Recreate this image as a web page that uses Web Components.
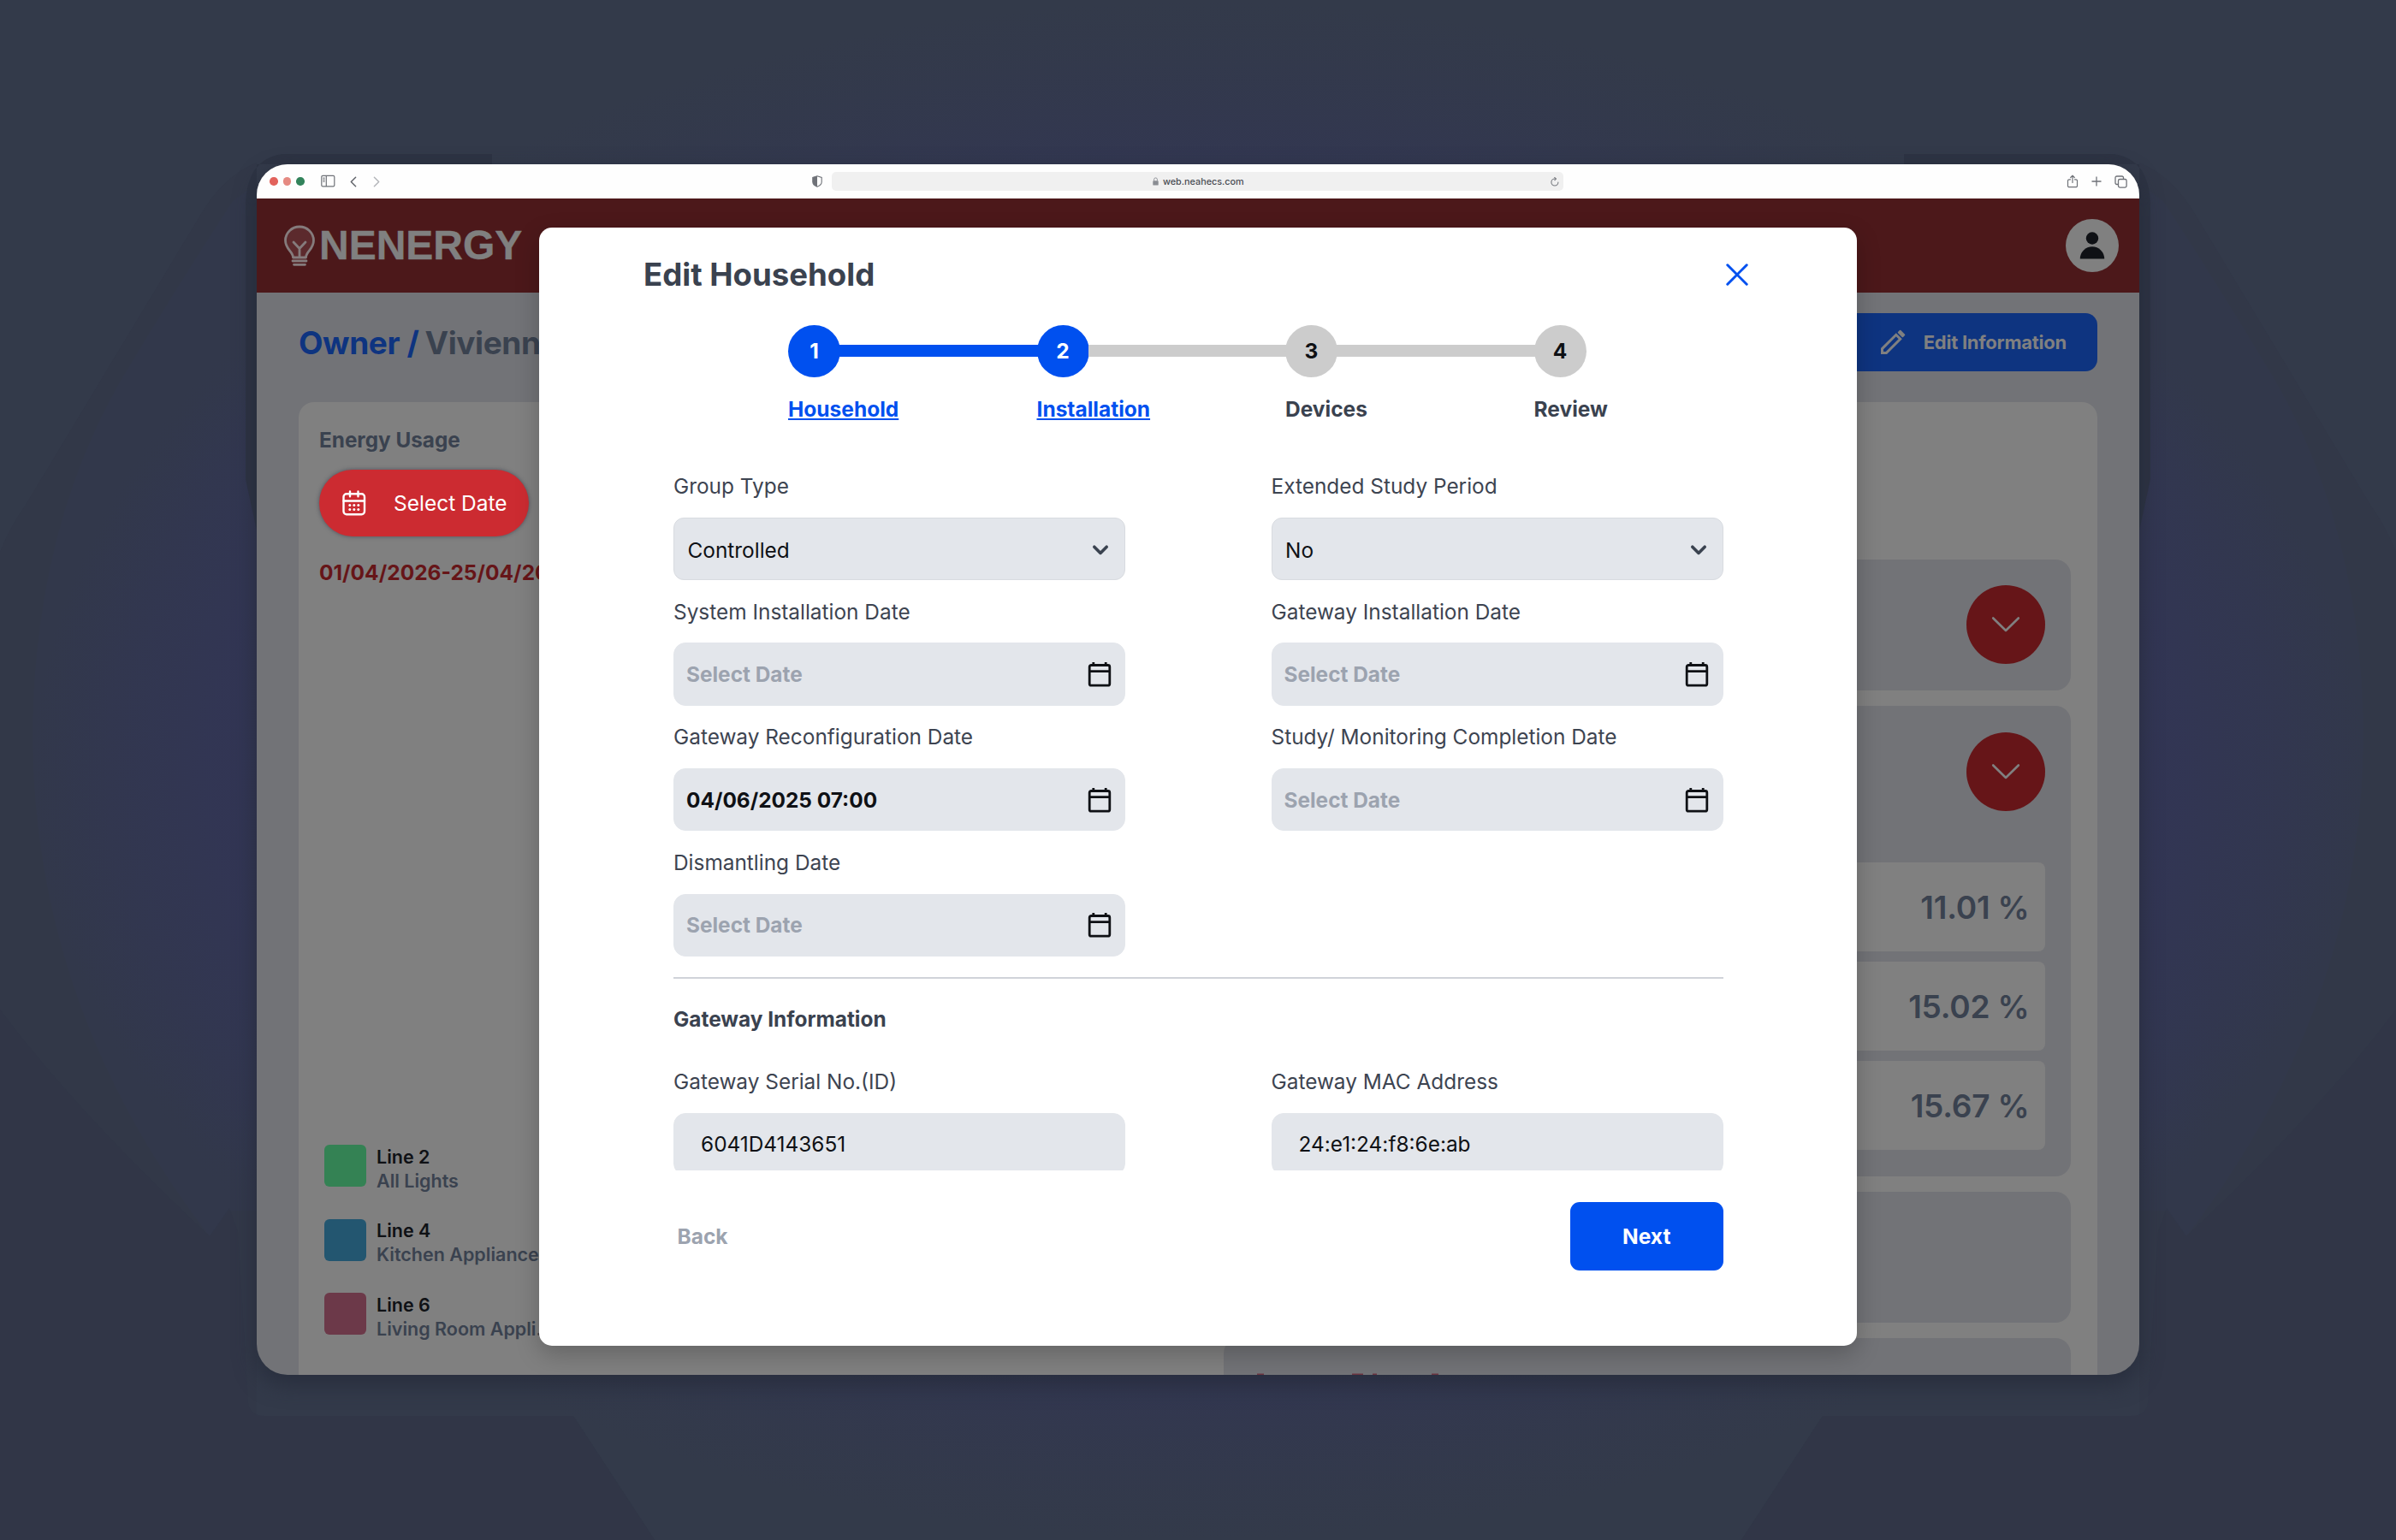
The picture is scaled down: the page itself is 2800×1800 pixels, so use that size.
<!DOCTYPE html>
<html lang="en">
<head>
<meta charset="UTF-8">
<title>Edit Household</title>
<style>
  body {
    margin: 0;
    width: 2800px;
    height: 1800px;
    overflow: hidden;
    background: #333a4a;
    font-family: Inter, "Liberation Sans", sans-serif;
  }
</style>
</head>
<body>
<page-backdrop>
  <browser-window address="web.neahecs.com">
    <app-header></app-header>
    <app-page>
      <span slot="crumb">Owner /</span>
      <span slot="name">Vivienne</span>
      <energy-usage slot="left" range="01/04/2026-25/04/2026">
        <legend-line color="#348254" name="Line 2">All Lights</legend-line>
        <legend-line color="#235670" name="Line 4">Kitchen Appliance</legend-line>
        <legend-line color="#6c3949" name="Line 6">Living Room Appli...</legend-line>
      </energy-usage>
      <info-group slot="right"></info-group>
      <info-group slot="right">
        <percent-row>11.01 %</percent-row>
        <percent-row>15.02 %</percent-row>
        <percent-row>15.67 %</percent-row>
      </info-group>
      <info-group slot="right" plain></info-group>
      <info-group slot="right" plain cut></info-group>
    </app-page>
    <edit-dialog slot="dialog" heading="Edit Household">
      <step-item slot="steps" number="1" done line>Household</step-item>
      <step-item slot="steps" number="2" done>Installation</step-item>
      <step-item slot="steps" number="3">Devices</step-item>
      <step-item slot="steps" number="4" last>Review</step-item>

      <form-field kind="select" label="Group Type">Controlled</form-field>
      <form-field kind="select" label="Extended Study Period">No</form-field>
      <form-field kind="date" label="System Installation Date" empty>Select Date</form-field>
      <form-field kind="date" label="Gateway Installation Date" empty>Select Date</form-field>
      <form-field kind="date" label="Gateway Reconfiguration Date">04/06/2025 07:00</form-field>
      <form-field kind="date" label="Study/ Monitoring Completion Date" empty>Select Date</form-field>
      <form-field kind="date" label="Dismantling Date" empty>Select Date</form-field>

      <form-field slot="gateway" kind="text" label="Gateway Serial No.(ID)">6041D4143651</form-field>
      <form-field slot="gateway" kind="text" label="Gateway MAC Address">24:e1:24:f8:6e:ab</form-field>
    </edit-dialog>
  </browser-window>
</page-backdrop>

<script>
// Icon markup, keyed by name
const ICONS = {
  sidebar: '<svg width="17" height="16" viewBox="0 0 17 16" fill="none" stroke="#6f7278" stroke-width="1.2"><rect x=".8" y="1.3" width="15" height="12.6" rx="1.4"/><path d="M6.3 1.3v12.6M2.5 4.2h2M2.5 6.2h2M2.5 8.2h2"/></svg>',
  back: '<svg width="8" height="13" viewBox="0 0 8 13" fill="none" stroke="#62656b" stroke-width="1.5" stroke-linecap="round" stroke-linejoin="round"><path d="M6.6 1.2 1.3 6.5l5.3 5.3"/></svg>',
  forward: '<svg width="8" height="13" viewBox="0 0 8 13" fill="none" stroke="#b4b6ba" stroke-width="1.5" stroke-linecap="round" stroke-linejoin="round"><path d="M1.4 1.2 6.7 6.5l-5.3 5.3"/></svg>',
  shield: '<svg width="12" height="14" viewBox="0 0 12 14"><path d="M6 .8 11.2 2.5v5.2c0 2.6-2.3 4.4-5.2 5.6C3.1 12.1.8 10.3.8 7.7V2.5z" fill="none" stroke="#6f7278" stroke-width="1.1"/><path d="M6 .8v12.5C3.1 12.1.8 10.3.8 7.7V2.5z" fill="#6f7278"/></svg>',
  lock: '<svg width="7" height="10" viewBox="0 0 7 10"><rect x=".3" y="4.2" width="6.4" height="5.4" rx=".9" fill="#8a8d93"/><path d="M1.6 4.5V2.8a1.9 1.9 0 0 1 3.8 0v1.7" fill="none" stroke="#8a8d93" stroke-width=".9"/></svg>',
  reload: '<svg width="10" height="11" viewBox="0 0 10 11" fill="none" stroke="#777a80" stroke-width="1.1" stroke-linecap="round"><path d="M8.9 6a4 4 0 1 1-4-4h1.3"/><path d="M4.7.5 6.4 2 4.9 3.7"/></svg>',
  share: '<svg width="14" height="16" viewBox="0 0 14 16" fill="none" stroke="#6f7278" stroke-width="1.2" stroke-linecap="round" stroke-linejoin="round"><path d="M4.5 5.8H3a1.5 1.5 0 0 0-1.5 1.5v5.9A1.5 1.5 0 0 0 3 14.7h8a1.5 1.5 0 0 0 1.5-1.5V7.3A1.5 1.5 0 0 0 11 5.8H9.5M7 9.5V1.4M4.7 3.5 7 1.2l2.3 2.3"/></svg>',
  plus: '<svg width="12" height="12" viewBox="0 0 12 12" stroke="#6f7278" stroke-width="1.3"><path d="M6 .5v11M.5 6h11"/></svg>',
  copy: '<svg width="15" height="15" viewBox="0 0 15 15" fill="none" stroke="#6f7278" stroke-width="1.3"><rect x="4.5" y="4.5" width="9.6" height="9.6" rx="1.8"/><path d="M4.5 10.5H2.7A1.7 1.7 0 0 1 1 8.8V2.7A1.7 1.7 0 0 1 2.7 1h6.1a1.7 1.7 0 0 1 1.7 1.7v1.8"/></svg>',
  bulb: '<svg width="38" height="48" viewBox="0 0 38 48" fill="none" stroke="#857b7c" stroke-width="2.8" stroke-linecap="round" stroke-linejoin="round"><path d="M11.5 38c0-7-9-9.5-9-20a16.5 16 0 0 1 33 0c0 10.5-9 13-9 20z" fill="#5c2a2d"/><path d="M19 37.5V27.500M19 27.5 12 20M19 27.5l7-7.5"/><path d="M11 42h16M12.5 46.3h13"/></svg>',
  pencil: '<svg width="30" height="30" viewBox="0 0 30 30" fill="none" stroke="#808080" stroke-width="3" stroke-linejoin="miter"><path d="M2.5 22.6 18.8 6.3l4.9 4.9L7.4 27.5H2.5z"/><path d="m21.7 3.6 1.9-1.9 4.7 4.7-1.9 1.9z" fill="#808080" stroke-width="2" stroke-linejoin="round"/></svg>',
  calendarDots: '<svg width="28" height="30" viewBox="0 0 28 30" fill="none" stroke="#fff" stroke-width="2.4" stroke-linecap="round" stroke-linejoin="round"><rect x="1.5" y="4.3" width="24.5" height="24" rx="3.5"/><path d="M1.5 12.5H26M9 1.5v5.8M18.5 1.5v5.8"/><g fill="#fff" stroke="none"><circle cx="8.8" cy="17.4" r="1.5"/><circle cx="13.8" cy="17.4" r="1.5"/><circle cx="18.8" cy="17.4" r="1.5"/><circle cx="8.8" cy="22.4" r="1.5"/><circle cx="13.8" cy="22.4" r="1.5"/><circle cx="18.8" cy="22.4" r="1.5"/></g></svg>',
  calendar: '<svg width="28" height="30" viewBox="0 0 28 30" fill="none" stroke="#0f1115" stroke-width="2.8" stroke-linejoin="round"><rect x="2.2" y="4.5" width="23.6" height="23.7" rx="2"/><path d="M2.2 11.7h23.6M6.8 4.5V1M21.2 4.5V1"/></svg>',
  chevron: '<svg width="20" height="14" viewBox="0 0 20 14" fill="none" stroke="#3a424f" stroke-width="3.6" stroke-linecap="round" stroke-linejoin="round"><path d="m2.8 3.2 7.2 7.2L17.2 3.2"/></svg>',
  wideChevron: '<svg width="34" height="20" viewBox="0 0 34 20" fill="none" stroke="#808080" stroke-width="2.6" stroke-linecap="round" stroke-linejoin="round"><path d="m2.2 2.5 14.8 14.5 14.8-14.5"/></svg>',
  close: '<svg width="28" height="28" viewBox="0 0 28 28" fill="none" stroke="#0050ef" stroke-width="3" stroke-linecap="round"><path d="m2.8 2.8 22.4 22.4M25.2 2.8 2.8 25.2"/></svg>',
  person: '<svg width="30" height="34" viewBox="0 0 30 34" fill="#0f1115"><circle cx="15" cy="8.5" r="7.2"/><path d="M.8 32.5a14.2 14.2 0 0 1 28.4 0z"/></svg>'
};

// Small base: attach an open root and fill it once connected
class BaseElement extends HTMLElement {
  constructor() {
    super();
    this.attachShadow({ mode: 'open' });
  }

  connectedCallback() {
    this.shadowRoot.innerHTML = `<style>${this.styles()}</style>${this.markup()}`;
  }

  attr(name) {
    return this.getAttribute(name) || '';
  }
}

class PageBackdrop extends BaseElement {
  styles() {
    return `
      :host {
        display: block;
        position: relative;
        box-sizing: border-box;
        width: 2800px;
        height: 1800px;
        padding: 192px 300px 0;
      }
      .glow { position: absolute; inset: 0; z-index: -1; }
    `;
  }

  markup() {
    // One side of the stepped halo; the other side is its mirror image
    const side = `
      <path d="M300 190Q262 205 235 250L30 590Q12 615 0 645V1800H765L670 1655H300z" fill="#323848"/>
      <path d="M300 215 272 235Q210 330 150 430 40 610 38 860 40 1180 245 1445L268 1415H300z" fill="url(#rim)"/>
    `;
    const frame = `
      <path d="M575 180H330Q288 186 287 240V560L300 620V192H575z" fill="#2d3343"/>
      <path d="M245 1445 268 1412 278 1440 290 1640Q292 1655 310 1655H670L765 1800H0V1180Q90 1300 245 1445z" fill="#303647" opacity=".7"/>
    `;
    return `
      <svg class="glow" width="2800" height="1800" viewBox="0 0 2800 1800">
        <defs>
          <radialGradient id="halo">
            <stop offset="0" stop-color="#343464"/>
            <stop offset=".7" stop-color="#323556"/>
            <stop offset="1" stop-color="#323750" stop-opacity="0"/>
          </radialGradient>
          <radialGradient id="rim" gradientUnits="userSpaceOnUse" cx="0" cy="0" r="1362" gradientTransform="matrix(1 0 0 .62 1400 900)">
            <stop offset=".8" stop-color="#323556"/>
            <stop offset="1" stop-color="#32384b"/>
          </radialGradient>
        </defs>
        <rect width="2800" height="1800" fill="#333a4a"/>
        ${side}
        <g transform="matrix(-1 0 0 1 2800 0)">${side}</g>
        <ellipse cx="1400" cy="900" rx="1362" ry="900" fill="url(#halo)"/>
        ${frame}
        <g transform="matrix(-1 0 0 1 2800 0)">${frame}</g>
      </svg>
      <slot></slot>
    `;
  }
}

class BrowserWindow extends BaseElement {
  styles() {
    return `
      :host {
        display: flex;
        flex-direction: column;
        position: relative;
        height: 1415px;
        border-radius: 36px;
        box-shadow: 0 10px 24px 2px rgba(38, 43, 58, .75);
        overflow: hidden;
        background: #727377;
      }
      .toolbar {
        display: grid;
        grid-template-columns: 672px 855px 1fr;
        align-items: center;
        flex: none;
        height: 40px;
        background: #fefefe;
      }
      .toolbar svg { display: block; }
      .start { display: flex; align-items: center; padding: 0 11px 0 15px; }
      .dot { width: 9.5px; height: 9.5px; border-radius: 50%; margin-right: 6px; }
      .side { margin: 0 17px 0 13px; }
      .forward { margin-left: 19px; }
      .shield { margin-left: auto; }
      .address {
        display: flex;
        align-items: center;
        height: 21.5px;
        border-radius: 5px;
        background: #f0f0f0;
        font-size: 10.8px;
        font-weight: 500;
        color: #4a4d54;
      }
      .lock { margin: 0 5px 0 375px; }
      .reload { margin: 0 5px 0 auto; }
      .end { display: flex; align-items: center; justify-content: flex-end; gap: 15px; padding-right: 14px; }
      ::slotted([slot="dialog"]) { position: absolute; left: 330px; top: 74px; }
    `;
  }

  markup() {
    return `
      <div class="toolbar">
        <div class="start">
          <span class="dot" style="background:#e2625c"></span>
          <span class="dot" style="background:#e58a82"></span>
          <span class="dot" style="background:#32835b"></span>
          <span class="side">${ICONS.sidebar}</span>
          ${ICONS.back}
          <span class="forward">${ICONS.forward}</span>
          <span class="shield">${ICONS.shield}</span>
        </div>
        <div class="address">
          <span class="lock">${ICONS.lock}</span>${this.attr('address')}
          <span class="reload">${ICONS.reload}</span>
        </div>
        <div class="end">${ICONS.share}${ICONS.plus}${ICONS.copy}</div>
      </div>
      <slot></slot>
      <slot name="dialog"></slot>
    `;
  }
}

class AppHeader extends BaseElement {
  styles() {
    return `
      :host {
        display: flex;
        align-items: center;
        flex: none;
        height: 110px;
        padding: 0 24px 0 31px;
        background: #4c181a;
      }
      .name {
        margin-left: 4px;
        font: bold 48px "Liberation Sans", Arial, sans-serif;
        line-height: 56px;
        color: #808080;
        -webkit-text-stroke: .4px #808080;
      }
      .avatar {
        display: flex;
        align-items: center;
        justify-content: center;
        width: 62px;
        height: 62px;
        margin-left: auto;
        border-radius: 50%;
        background: #808080;
      }
    `;
  }

  markup() {
    return `${ICONS.bulb}<span class="name">NENERGY</span><span class="avatar">${ICONS.person}</span>`;
  }
}

class AppPage extends BaseElement {
  styles() {
    return `
      :host {
        display: flex;
        flex-direction: column;
        flex: 1;
        min-height: 0;
        padding: 24px 49px 0;
      }
      .bar { display: flex; align-items: center; height: 68px; margin-bottom: 36px; flex: none; }
      .title { display: flex; gap: 7px; font-size: 37px; font-weight: 700; letter-spacing: -.4px; color: #3a424f; }
      .crumb { color: #0e3480; }
      .edit {
        display: flex;
        align-items: center;
        justify-content: flex-end;
        width: 330px;
        height: 68px;
        margin-left: auto;
        padding-right: 36px;
        box-sizing: border-box;
        border-radius: 14px;
        background: #0e3480;
        color: #808080;
        font-size: 22px;
        font-weight: 700;
        letter-spacing: -.25px;
        gap: 21px;
      }
      .card {
        display: flex;
        flex: 1;
        min-height: 0;
        overflow: hidden;
        border-radius: 18px 18px 0 0;
        background: #808080;
      }
      .left { width: 1081px; flex: none; }
      .right {
        display: flex;
        flex-direction: column;
        gap: 18.5px;
        width: 990px;
        padding-top: 183.5px;
      }
    `;
  }

  markup() {
    return `
      <div class="bar">
        <div class="title"><span class="crumb"><slot name="crumb"></slot></span><slot name="name"></slot></div>
        <div class="edit">${ICONS.pencil}<span>Edit Information</span></div>
      </div>
      <div class="card">
        <div class="left"><slot name="left"></slot></div>
        <div class="right"><slot name="right"></slot></div>
      </div>
    `;
  }
}

class EnergyUsage extends BaseElement {
  styles() {
    return `
      :host { display: block; padding: 28.5px 0 0 24px; }
      .heading { height: 30px; line-height: 30px; font-size: 24.3px; font-weight: 700; color: #3a424f; }
      .pick {
        display: flex;
        align-items: center;
        box-sizing: border-box;
        width: 245px;
        height: 78px;
        margin: 20.5px 0 27px;
        padding-left: 27px;
        gap: 32px;
        border-radius: 39px;
        background: #cc2b31;
        box-shadow: 0 0 5px rgba(30, 30, 50, .5);
        color: #fff;
        font-size: 24.5px;
      }
      .range { height: 30px; line-height: 30px; font-size: 24.5px; font-weight: 700; color: #661518; }
      .lines { display: flex; flex-direction: column; gap: 37.5px; margin: 654px 0 0 6px; }
    `;
  }

  markup() {
    return `
      <div class="heading">Energy Usage</div>
      <div class="pick">${ICONS.calendarDots}<span>Select Date</span></div>
      <div class="range">${this.attr('range')}</div>
      <div class="lines"><slot></slot></div>
    `;
  }
}

class LegendLine extends BaseElement {
  styles() {
    return `
      :host { display: flex; gap: 12px; height: 49px; }
      .swatch { width: 49px; height: 49px; border-radius: 6px; background: ${this.attr('color')}; }
      .text { font-size: 21.5px; line-height: 28px; font-weight: 600; color: #3a424f; white-space: nowrap; margin-top: -.5px; }
      .name { color: #0f1115; }
    `;
  }

  markup() {
    return `<span class="swatch"></span><div class="text"><div class="name">${this.attr('name')}</div><slot></slot></div>`;
  }
}

class InfoGroup extends BaseElement {
  styles() {
    return `
      :host {
        display: block;
        position: relative;
        box-sizing: border-box;
        flex: none;
        min-height: 152.5px;
        padding: 30.5px;
        border-radius: 18px;
        background: #727377;
      }
      .toggle {
        display: flex;
        align-items: center;
        justify-content: center;
        width: 92px;
        height: 92px;
        margin-left: auto;
        border-radius: 50%;
        background: #661518;
      }
      .rows { display: flex; flex-direction: column; gap: 12px; }
      .rows.filled { padding-top: 60.5px; }
      .tips { position: absolute; left: 39px; top: 41px; }
    `;
  }

  markup() {
    const toggle = this.hasAttribute('plain') ? '' : `<div class="toggle">${ICONS.wideChevron}</div>`;
    // Only the top edge of the last group's heading is above the window's lower edge
    const tips = this.hasAttribute('cut')
      ? '<svg class="tips" width="216" height="2" fill="#6b3540"><path d="M0 .5h8v1.5H0zM111 .5h13v1.5h-13zM135 .5h5v1.5h-5zM204 .5h8v1.5h-8z"/></svg>'
      : '';
    return `${toggle}<div class="rows ${this.children.length ? 'filled' : ''}"><slot></slot></div>${tips}`;
  }
}

class PercentRow extends BaseElement {
  styles() {
    return `
      :host {
        display: flex;
        align-items: center;
        justify-content: flex-end;
        box-sizing: border-box;
        height: 104px;
        padding-right: 18px;
        border-radius: 8px;
        background: #808080;
        color: #3a424f;
        font-size: 37px;
        font-weight: 600;
        letter-spacing: -.2px;
      }
    `;
  }

  markup() {
    return '<slot></slot>';
  }
}

class EditDialog extends BaseElement {
  styles() {
    return `
      :host {
        display: flex;
        flex-direction: column;
        width: 1540px;
        height: 1307px;
        border-radius: 15px;
        background: #fff;
        box-shadow: 0 10px 28px rgba(0, 0, 0, .22);
      }
      .head {
        display: flex;
        align-items: center;
        justify-content: space-between;
        height: 110px;
        padding: 0 126px 0 122px;
        font-size: 36.6px;
        font-weight: 700;
        color: #3a424f;
      }
      .head svg { display: block; }
      .steps { display: flex; padding: 3.5px 0 0 291px; }
      .body { height: 815px; margin: 60.5px 156px 0 157px; overflow: hidden; flex: none; }
      .grid { display: grid; grid-template-columns: 528px 528px; column-gap: 170.5px; row-gap: 21.7px; }
      .rule { height: 2.5px; margin: 23.5px 0 32px; background: #d0d3d9; }
      .section { height: 30px; line-height: 30px; margin-bottom: 43px; font-size: 24.4px; font-weight: 700; color: #3a424f; }
      .foot {
        display: flex;
        align-items: center;
        justify-content: space-between;
        margin: 37.3px 156.5px 0 161.5px;
        font-size: 24.5px;
        font-weight: 700;
      }
      .back { color: #9ca3af; }
      .next {
        width: 178.5px;
        height: 79.5px;
        line-height: 81px;
        border-radius: 11px;
        text-align: center;
        background: #0050ef;
        color: #fff;
      }
    `;
  }

  markup() {
    return `
      <div class="head"><span>${this.attr('heading')}</span>${ICONS.close}</div>
      <div class="steps"><slot name="steps"></slot></div>
      <div class="body">
        <div class="grid"><slot></slot></div>
        <div class="rule"></div>
        <div class="section">Gateway Information</div>
        <div class="grid"><slot name="gateway"></slot></div>
      </div>
      <div class="foot"><span class="back">Back</span><span class="next">Next</span></div>
    `;
  }
}

class StepItem extends BaseElement {
  styles() {
    const done = this.hasAttribute('done');
    return `
      :host { display: block; width: 290.5px; }
      .track { display: flex; align-items: center; }
      .dot {
        flex: none;
        width: 61px;
        height: 61px;
        line-height: 61px;
        border-radius: 50%;
        text-align: center;
        font-size: 24.5px;
        font-weight: 700;
        background: ${done ? '#0050ef' : '#ccc'};
        color: ${done ? '#fff' : '#0f1115'};
      }
      .line {
        flex: 1;
        height: 14.5px;
        margin: 0 -1px;
        background: ${this.hasAttribute('line') ? '#0050ef' : '#ccc'};
      }
      .label {
        display: inline-block;
        height: 30px;
        line-height: 30px;
        margin-top: 22px;
        font-size: 24.5px;
        font-weight: 700;
        color: ${done ? '#0050ef' : '#3a424f'};
        text-decoration: ${done ? 'underline' : 'none'};
      }
    `;
  }

  markup() {
    return `
      <div class="track">
        <span class="dot">${this.attr('number')}</span>
        ${this.hasAttribute('last') ? '' : '<span class="line"></span>'}
      </div>
      <span class="label"><slot></slot></span>
    `;
  }
}

class FormField extends BaseElement {
  styles() {
    const kind = this.attr('kind');
    const left = { select: 15.5, date: 14, text: 31 }[kind];
    const right = { select: 18, date: 15.5, text: 16 }[kind];
    return `
      :host { display: block; }
      .label { height: 30px; line-height: 30px; font-size: 24.4px; color: #3d4451; white-space: nowrap; }
      .box {
        display: flex;
        align-items: center;
        justify-content: space-between;
        box-sizing: border-box;
        height: 73.3px;
        margin-top: 21.7px;
        padding: ${kind === 'select' ? 3 : 0}px ${right}px 0 ${left}px;
        border: 1px solid ${kind === 'select' ? '#d8dbe0' : '#e3e6eb'};
        border-radius: ${kind === 'select' ? 12 : 14}px;
        background: #e3e6eb;
        font-size: 24.4px;
        font-weight: ${kind === 'date' ? 700 : 400};
        color: ${this.hasAttribute('empty') ? '#9ca3af' : '#0f1115'};
      }
      svg { display: block; }
    `;
  }

  markup() {
    const icon = { select: ICONS.chevron, date: ICONS.calendar, text: '' }[this.attr('kind')];
    return `<div class="label">${this.attr('label')}</div><div class="box"><span><slot></slot></span>${icon}</div>`;
  }
}

customElements.define('page-backdrop', PageBackdrop);
customElements.define('browser-window', BrowserWindow);
customElements.define('app-header', AppHeader);
customElements.define('app-page', AppPage);
customElements.define('energy-usage', EnergyUsage);
customElements.define('legend-line', LegendLine);
customElements.define('info-group', InfoGroup);
customElements.define('percent-row', PercentRow);
customElements.define('edit-dialog', EditDialog);
customElements.define('step-item', StepItem);
customElements.define('form-field', FormField);
</script>
</body>
</html>
